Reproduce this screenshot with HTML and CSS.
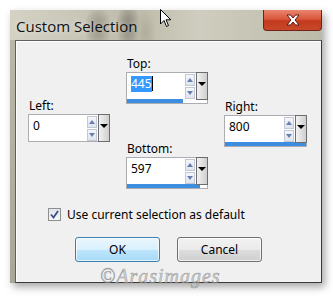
FILE: index.html
```html
<!DOCTYPE html>
<html lang="en">
<head>
    <meta charset="UTF-8">
    <title>Custom Selection</title>
    <link rel="stylesheet" href="styles.css">
</head>
<body>
    <div class="window">
        <div class="titlebar">
            <span class="title">Custom Selection</span>
            <div class="close">
                <svg width="16" height="12" viewBox="0 0 16 12">
                    <path d="M2 1 L5.5 1 L8 4 L10.5 1 L14 1 L10 6 L14 11 L10.5 11 L8 8 L5.5 11 L2 11 L6 6 Z" fill="#fff" stroke="#5a1a10" stroke-width="1" stroke-linejoin="round"/>
                </svg>
            </div>
        </div>
        <div class="frame">
            <div class="client">
                <div class="fields">
                    <!-- columna izquierda -->
                    <div class="col col-left">
                        <div class="field">
                            <div class="label">Left:</div>
                            <div class="box">
                                <div class="row">
                                    <span class="value">0</span>
                                    <div class="spin"><span class="up"></span><span class="down"></span></div>
                                    <div class="drop"></div>
                                </div>
                                <div class="track track-empty"></div>
                            </div>
                        </div>
                    </div>
                    <!-- columna central -->
                    <div class="col col-mid">
                        <div class="field">
                            <div class="label">Top:</div>
                            <div class="box">
                                <div class="row">
                                    <span class="value"><span class="sel">445</span><span class="caret"></span></span>
                                    <div class="spin"><span class="up"></span><span class="down"></span></div>
                                    <div class="drop"></div>
                                </div>
                                <div class="track"><div class="bar" style="width: 70%"></div></div>
                            </div>
                        </div>
                        <div class="field field-bottom">
                            <div class="label">Bottom:</div>
                            <div class="box">
                                <div class="row">
                                    <span class="value">597</span>
                                    <div class="spin"><span class="up"></span><span class="down"></span></div>
                                    <div class="drop"></div>
                                </div>
                                <div class="track"><div class="bar" style="width: 91%"></div></div>
                            </div>
                        </div>
                    </div>
                    <!-- columna derecha -->
                    <div class="col col-right">
                        <div class="field">
                            <div class="label">Right:</div>
                            <div class="box">
                                <div class="row">
                                    <span class="value">800</span>
                                    <div class="spin"><span class="up"></span><span class="down"></span></div>
                                    <div class="drop"></div>
                                </div>
                                <div class="track"><div class="bar" style="width: 100%"></div></div>
                            </div>
                        </div>
                    </div>
                </div>
                <label class="check">
                    <span class="checkbox">
                        <svg width="9" height="9" viewBox="0 0 9 9"><path d="M1 4.5 L3.5 7.5 L8 1" fill="none" stroke="#3b4f8a" stroke-width="1.8"/></svg>
                    </span>
                    Use current selection as default
                </label>
                <div class="buttons">
                    <button class="btn btn-ok">OK</button>
                    <button class="btn">Cancel</button>
                </div>
                <div class="watermark">&copy;Arasimages</div>
            </div>
        </div>
    </div>
    <svg class="cursor" width="12" height="19" viewBox="0 0 12 19">
        <path d="M0.5 0.5 L0.5 15 L4 11.5 L6.5 17.5 L8.5 16.5 L6 10.8 L10.8 10.8 Z" fill="#fff" stroke="#000" stroke-width="1"/>
    </svg>
</body>
</html>
```

FILE: styles.css
```css
/* Estilos generales */
body {
    margin: 0;
    padding: 0;
    background-color: #fff;
    font-family: "Noto Sans", "Open Sans", sans-serif;
    font-size: 12px;
    color: #000;
    position: relative;
    width: 333px;
    height: 296px;
    overflow: hidden;
}

.window {
    margin: 10px 0 0 10px;
    width: 312px;
    height: 273px;
    display: flex;
    flex-direction: column;
    box-shadow: 3px 4px 8px rgba(0, 0, 0, 0.35);
}

/* Barra de titulo */
.titlebar {
    height: 30px;
    display: flex;
    align-items: flex-start;
    justify-content: space-between;
    background:
        radial-gradient(ellipse 14px 22px at 88px 18px, rgba(80, 75, 65, 0.45), transparent),
        radial-gradient(ellipse 12px 24px at 118px 16px, rgba(70, 68, 60, 0.5), transparent),
        radial-gradient(ellipse 10px 22px at 136px 22px, rgba(150, 140, 120, 0.35), transparent),
        linear-gradient(90deg, #d4d2c4 0%, #c9c7b8 20%, #bdbaa9 40%, #cfcdbf 60%, #c6c4b4 80%, #bcbaa8 100%);
}

.title {
    margin: 5px 0 0 6px;
    font-family: "Open Sans", "Noto Sans", sans-serif;
    font-size: 15px;
    line-height: 22px;
    color: #111;
    text-shadow: 0 0 6px rgba(255, 255, 255, 0.8);
}

.close {
    width: 59px;
    height: 21px;
    box-sizing: border-box;
    border: 1px solid #6e2317;
    border-top: none;
    border-radius: 0 0 4px 4px;
    background: linear-gradient(#e9866e 0%, #d9573c 45%, #c23a1e 55%, #c9472a 100%);
    display: flex;
    align-items: center;
    justify-content: center;
}

.frame {
    flex: 1;
    display: flex;
    padding-left: 5px;
    background: linear-gradient(#b9b7a8, #a9a796);
}

/* Area del cliente */
.client {
    flex: 1;
    position: relative;
    background-color: #f0f0f0;
    border: 1px solid #5f5f5f;
    border-right-color: #3a3a3a;
    border-bottom-color: #3a3a3a;
    box-shadow: inset 1px 1px 0 #fff;
}

.fields {
    display: flex;
    gap: 16px;
    padding-left: 12px;
}

.col {
    width: 82px;
    display: flex;
    flex-direction: column;
}

.col-left {
    padding-top: 56px;
}

.col-mid {
    padding-top: 14px;
}

.col-right {
    width: 83px;
    padding-top: 57px;
}

.field-bottom {
    margin-top: 36px;
}

.label {
    line-height: 17px;
    padding-left: 1px;
}

.box {
    background: #fff;
    border: 1px solid #abadb3;
    display: flex;
    flex-direction: column;
}

.row {
    display: flex;
    height: 26px;
}

.value {
    flex: 1;
    padding: 3px 0 0 4px;
    line-height: 16px;
    display: flex;
    align-items: flex-start;
}

.sel {
    background: #3399ff;
    color: #fff;
}

.caret {
    width: 1px;
    height: 15px;
    background: #000;
}

/* Botones de giro */
.spin {
    width: 10px;
    display: flex;
    flex-direction: column;
    gap: 1px;
    padding-top: 1px;
    margin-right: 1px;
}

.spin span {
    height: 10px;
    border: 1px solid #c2c8d4;
    background: linear-gradient(#f4f6fa, #dfe4ee);
    position: relative;
}

.spin span::after {
    content: "";
    position: absolute;
    left: 1px;
    border-left: 3px solid transparent;
    border-right: 3px solid transparent;
}

.spin .up::after {
    top: 3px;
    border-bottom: 4px solid #6a7fb0;
}

.spin .down::after {
    top: 3px;
    border-top: 4px solid #6a7fb0;
}

.drop {
    width: 10px;
    height: 100%;
    border: 1px solid #6d6d6d;
    margin: -1px -1px 0 0;
    background: linear-gradient(90deg, #f2f2f2, #cfcfcf);
    position: relative;
}

.drop::after {
    content: "";
    position: absolute;
    top: 9px;
    left: 1px;
    border-left: 4px solid transparent;
    border-right: 4px solid transparent;
    border-top: 4px solid #000;
}

.track {
    height: 4px;
}

.track-empty {
    height: 0;
}

.bar {
    height: 4px;
    background: #3d8ee0;
}

/* Casilla */
.check {
    display: flex;
    align-items: center;
    gap: 6px;
    margin: 17px 0 0 32px;
}

.checkbox {
    width: 11px;
    height: 11px;
    border: 1px solid #8e8f8f;
    background: linear-gradient(#e0e4ec, #f6f7f9);
    display: flex;
    align-items: center;
    justify-content: center;
}

/* Botones */
.buttons {
    display: flex;
    gap: 17px;
    margin: 14px 0 0 59px;
}

.btn {
    width: 85px;
    height: 25px;
    font-family: "Noto Sans", sans-serif;
    font-size: 12px;
    border: 1px solid #707070;
    border-radius: 3px;
    background: linear-gradient(#f2f2f2 0%, #ebebeb 50%, #dddddd 51%, #cfcfcf 100%);
    box-shadow: inset 0 0 0 1px rgba(255, 255, 255, 0.7);
    padding: 0;
}

.btn-ok {
    border-color: #3c7fb1;
    background: linear-gradient(#eaf6fd 0%, #d9f0fc 50%, #bee6fd 51%, #a7d9f5 100%);
}

.watermark {
    position: absolute;
    left: 84px;
    top: 224px;
    font-family: "Liberation Serif", serif;
    font-style: italic;
    font-size: 20px;
    color: rgba(190, 190, 190, 0.6);
    -webkit-text-stroke: 0.6px rgba(120, 120, 120, 0.6);
    letter-spacing: 1px;
}

.cursor {
    position: absolute;
    left: 160px;
    top: 9px;
}
```
